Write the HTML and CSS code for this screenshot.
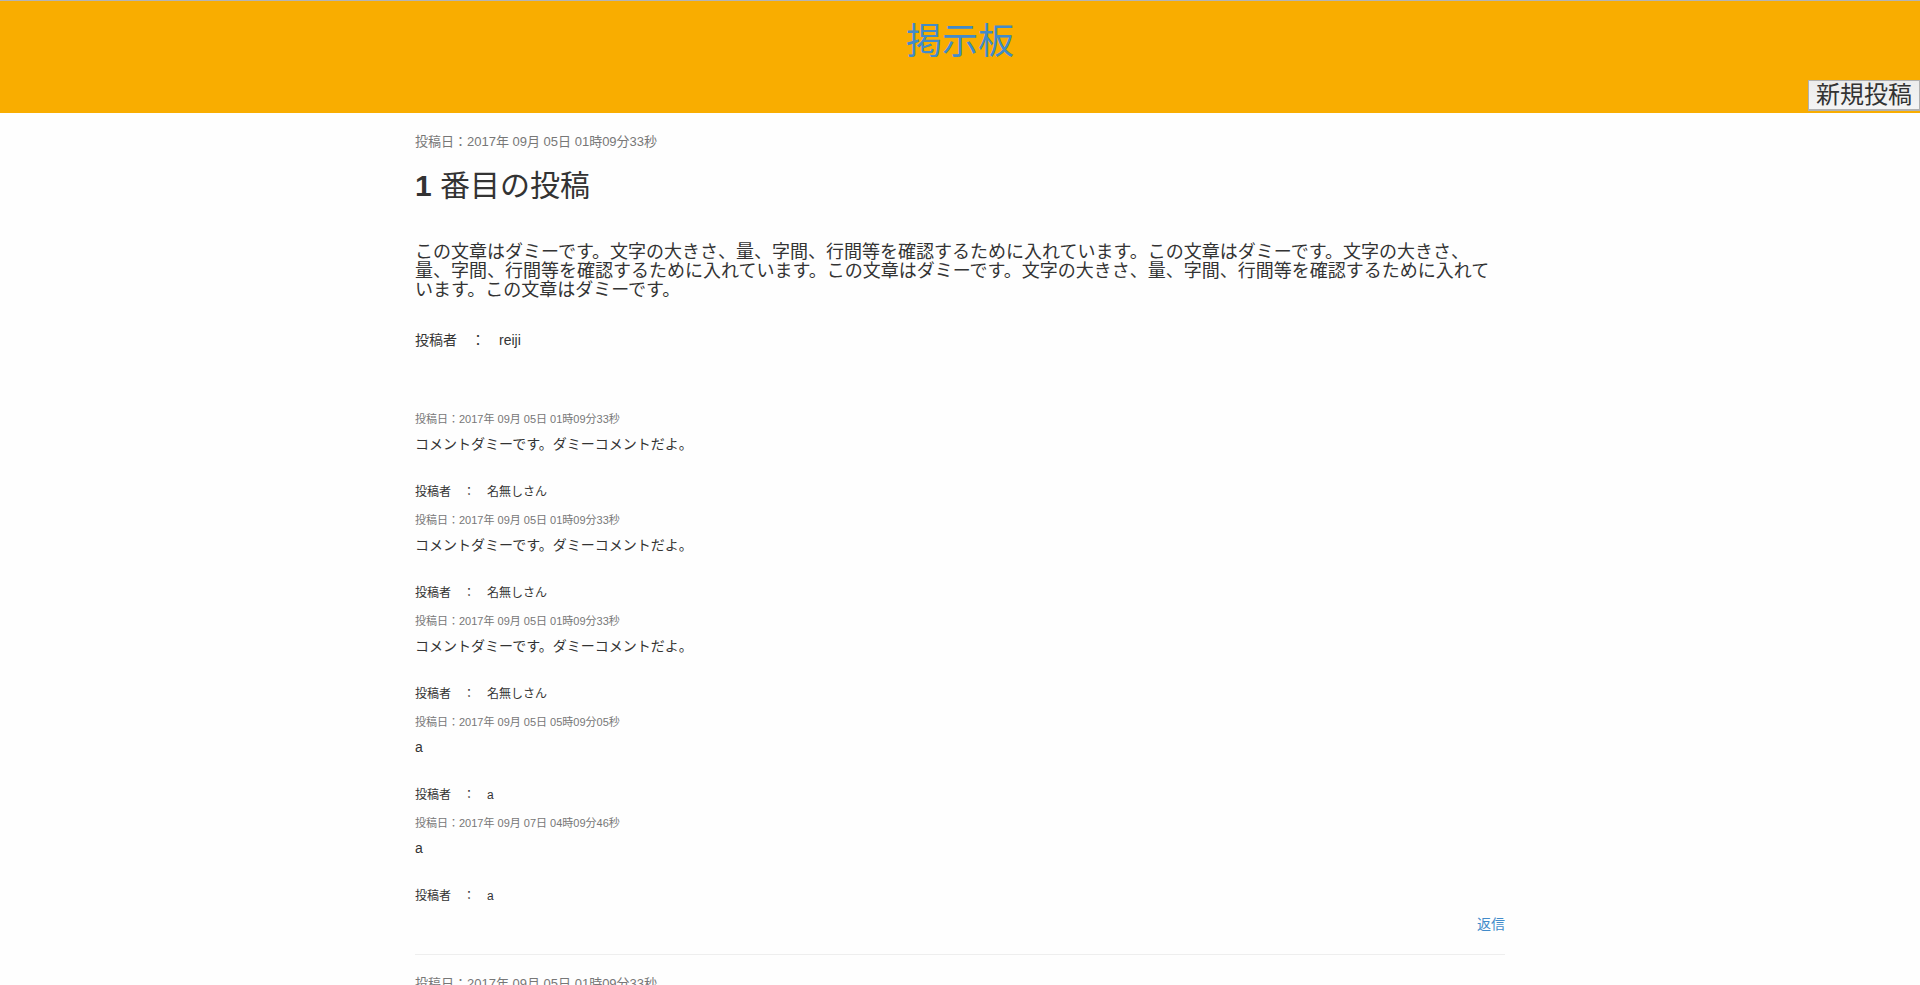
FILE: index.html
```html
<!DOCTYPE html>
<html lang="ja">
<head>
<meta charset="utf-8">
<title>掲示板</title>
<link rel="stylesheet" href="styles.css">
</head>
<body>
<header class="site-header">
  <h1 class="site-title"><a href="#">掲示板</a></h1>
  <button class="new-post" type="button">新規投稿</button>
</header>
<main class="board">
  <article class="post">
    <p class="post-date">投稿日：2017年 09月 05日 01時09分33秒</p>
    <h2 class="post-title"><strong>1</strong> 番目の投稿</h2>
    <p class="post-body">この文章はダミーです。文字の大きさ、量、字間、行間等を確認するために入れています。この文章はダミーです。文字の大きさ、量、字間、行間等を確認するために入れています。この文章はダミーです。文字の大きさ、量、字間、行間等を確認するために入れています。この文章はダミーです。</p>
    <p class="post-author">投稿者　：　reiji</p>
    <section class="comments">
      <div class="comment">
        <p class="comment-date">投稿日：2017年 09月 05日 01時09分33秒</p>
        <p class="comment-body">コメントダミーです。ダミーコメントだよ。</p>
        <p class="comment-author">投稿者　：　名無しさん</p>
      </div>
      <div class="comment">
        <p class="comment-date">投稿日：2017年 09月 05日 01時09分33秒</p>
        <p class="comment-body">コメントダミーです。ダミーコメントだよ。</p>
        <p class="comment-author">投稿者　：　名無しさん</p>
      </div>
      <div class="comment">
        <p class="comment-date">投稿日：2017年 09月 05日 01時09分33秒</p>
        <p class="comment-body">コメントダミーです。ダミーコメントだよ。</p>
        <p class="comment-author">投稿者　：　名無しさん</p>
      </div>
      <div class="comment">
        <p class="comment-date">投稿日：2017年 09月 05日 05時09分05秒</p>
        <p class="comment-body">a</p>
        <p class="comment-author">投稿者　：　a</p>
      </div>
      <div class="comment">
        <p class="comment-date">投稿日：2017年 09月 07日 04時09分46秒</p>
        <p class="comment-body">a</p>
        <p class="comment-author">投稿者　：　a</p>
      </div>
    </section>
    <p class="reply"><a href="#">返信</a></p>
  </article>
  <article class="post">
    <p class="post-date">投稿日：2017年 09月 05日 01時09分33秒</p>
  </article>
</main>
</body>
</html>
```
FILE: styles.css
```css
* {
  box-sizing: border-box;
}

body {
  margin: 0;
  background: #fefefe;
  color: #333;
  font-family: "Liberation Sans", "Noto Sans CJK JP", sans-serif;
  font-size: 14px;
  line-height: 20px;
}

p,
h1,
h2 {
  margin: 0;
  font-weight: normal;
}

a {
  color: #428bca;
  text-decoration: none;
}

.site-header {
  display: flex;
  flex-direction: column;
  padding: 21px 0 2px;
  border-top: 1px solid #b4b4b4;
  background: #f9ad00;
}

.site-title {
  margin-bottom: 18px;
  font-size: 36px;
  line-height: 40px;
  text-align: center;
}

.new-post {
  align-self: flex-end;
  padding: 0 7px 1px;
  border: 1px solid #b0b0b0;
  border-bottom-width: 2px;
  background: linear-gradient(#ececec, #f4f4f4);
  color: #333;
  font-family: inherit;
  font-size: 24px;
  line-height: 27px;
}

.board {
  max-width: 1120px;
  margin: 0 auto;
  padding: 0 15px;
}

.post {
  padding-top: 19px;
}

.post + .post {
  border-top: 1px solid #eee;
}

.post-date {
  color: #777;
  font-size: 13px;
}

.post-title {
  margin: 15px 0 38px;
  font-size: 30px;
  line-height: 38px;
}

.post-body {
  margin-bottom: 30px;
  padding-right: 8px;
  font-size: 18px;
  line-height: 19px;
}

.comments {
  margin-top: 59px;
}

.comment {
  margin-bottom: 8px;
}

.comment-date {
  margin-bottom: 5px;
  color: #777;
  font-size: 11px;
}

.comment-body {
  margin-bottom: 28px;
}

.comment-author {
  font-size: 12px;
}

.reply {
  margin-bottom: 20px;
  text-align: right;
}
```
